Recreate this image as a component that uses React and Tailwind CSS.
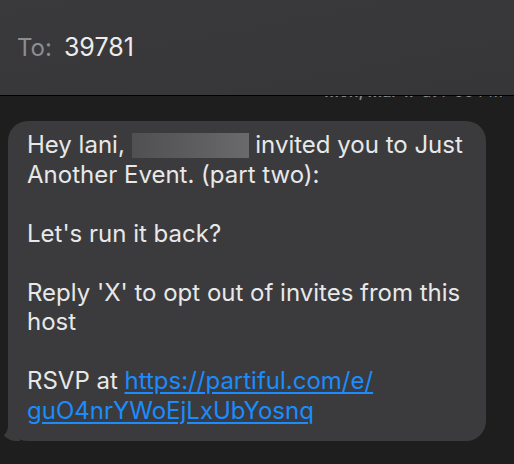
export default function App() {
  return (
    <div className="w-[514px] h-[464px] overflow-hidden bg-[#1e1e1e] flex flex-col" style={{ fontFamily: "Inter, 'Noto Sans', sans-serif" }}>
      {/* header */}
      <div className="relative z-10 h-[96px] shrink-0 bg-gradient-to-br from-[#3a3a3c] to-[#363638] border-b border-black flex items-center px-[17px] gap-[12px]">
        <span className="text-[24px] text-[#8d8d8f]">To:</span>
        <span className="text-[25px] text-[#ececec]">39781</span>
      </div>

      {/* timestamp, mostly hidden under header */}
      <div className="-mt-[13px] h-[16px] flex justify-end pr-[11px] text-[16px] leading-[16px] text-[#8a8a8a]">
        <span className="font-semibold">Mon, Mar 17</span>&nbsp;at 7:33 PM
      </div>

      {/* message bubble */}
      <div className="relative mt-[22px] ml-[8px] w-[478px] rounded-[20px] bg-[#3b3b3d] px-[19px] pt-[9px] pb-[16px] text-[24px] leading-[29.5px] text-[#e8e8e8]">
        <p>
          Hey lani,{" "}
          <span className="inline-block align-[-5px] w-[117px] h-[25px] bg-gradient-to-r from-[#505052] via-[#5c5c5e] to-[#6a6a6c]"></span>{" "}
          invited you to Just Another Event. (part two):
        </p>
        <p className="mt-[29.5px]">Let's run it back?</p>
        <p className="mt-[29.5px]">Reply 'X' to opt out of invites from this host</p>
        <p className="mt-[29.5px]">
          RSVP at{" "}
          <a href="#" className="text-[#1a8cff] underline underline-offset-[3px]">
            https://partiful.com/e/
            <br />
            guO4nrYWoEjLxUbYosnq
          </a>
        </p>
        <div className="absolute -left-[8px] bottom-0 w-[20px] h-[18px] bg-[#3b3b3d] rounded-bl-[16px]"></div>
        <div className="absolute -left-[14px] bottom-[3px] w-[14px] h-[20px] bg-[#1e1e1e] rounded-br-[12px]"></div>
      </div>
    </div>
  );
}
